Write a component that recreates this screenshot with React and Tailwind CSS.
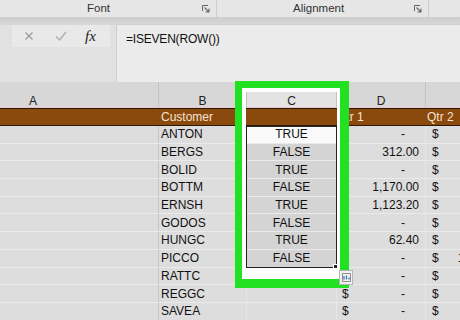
import React from "react";

const rows = [
  ["ANTON", "TRUE", "-"],
  ["BERGS", "FALSE", "312.00"],
  ["BOLID", "TRUE", "-"],
  ["BOTTM", "FALSE", "1,170.00"],
  ["ERNSH", "TRUE", "1,123.20"],
  ["GODOS", "FALSE", "-"],
  ["HUNGC", "TRUE", "62.40"],
  ["PICCO", "FALSE", "-"],
  ["RATTC", "", "-"],
  ["REGGC", "", "-"],
  ["SAVEA", "", "-"],
];

function Launcher() {
  return (
    <svg width="8" height="8" viewBox="0 0 8 8" className="text-[#666]">
      <path d="M0.5 6V0.5H6" fill="none" stroke="currentColor" strokeWidth="1" />
      <path d="M2.5 2.5L7 7M7 3.5V7H3.5" fill="none" stroke="currentColor" strokeWidth="1.1" />
    </svg>
  );
}

export default function App() {
  return (
    <div className="relative w-[460px] h-[320px] overflow-hidden bg-[#dddddd] font-['Liberation_Sans',sans-serif] text-[#111]">
      {/* ribbon group labels */}
      <div className="h-[17px] bg-[#e6e6e6] flex text-[11.5px] text-[#333]">
        <div className="w-[217px] shrink-0 border-r border-[#cdcdcd] flex items-center">
          <span className="ml-[87px]">Font</span>
          <span className="ml-auto mr-[6px] flex">
            <Launcher />
          </span>
        </div>
        <div className="w-[212px] shrink-0 border-r border-[#cdcdcd] flex items-center">
          <span className="ml-[76px]">Alignment</span>
          <span className="ml-auto mr-[6px] flex">
            <Launcher />
          </span>
        </div>
      </div>
      <div className="h-[8px] bg-gradient-to-b from-[#cccccc] to-[#d8d8d8]" />

      {/* formula bar */}
      <div className="h-[57px] bg-[#e1e1e1] flex">
        <div className="ml-[12px] w-[98px] h-[22px] shrink-0 bg-[#e9e9e9] flex items-center">
          <svg width="10" height="10" viewBox="0 0 10 10" className="ml-[12px]">
            <path d="M1.5 1.5L8.5 8.5M8.5 1.5L1.5 8.5" stroke="#9a9a9a" strokeWidth="1.2" />
          </svg>
          <svg width="12" height="10" viewBox="0 0 12 10" className="ml-[21px]">
            <path d="M1 5.5L4.5 9L11 1" fill="none" stroke="#b4b4b4" strokeWidth="1.6" />
          </svg>
          <span className="ml-[18px] font-['Liberation_Serif',serif] italic text-[15px] text-[#222] leading-none">
            fx
          </span>
        </div>
        <div className="ml-[6px] flex-1 bg-[#ebebeb] border-l border-t border-[#cfcfcf] -mt-[1px] pl-[9px] pt-[5px] text-[12px] tracking-[-0.2px] text-[#111]">
          =ISEVEN(ROW())
        </div>
      </div>

      {/* column headers */}
      <div className="h-[26px] bg-[#d7d7d7] border-b border-[#e6c8d0] flex text-[12px] leading-none text-[#222]">
        <div className="w-[159px] shrink-0 border-r border-[#c2c2c2] flex items-end pl-[29px]">A</div>
        <div className="w-[88px] shrink-0 border-r border-[#c2c2c2] flex items-end justify-center">B</div>
        <div className="w-[90px] shrink-0 border-r border-[#c2c2c2] bg-[#e3e3e3] flex items-end justify-center">C</div>
        <div className="w-[89px] shrink-0 border-r border-[#c2c2c2] flex items-end justify-center">D</div>
        <div className="flex-1" />
      </div>

      {/* table header row */}
      <div className="h-[18px] bg-[#8a4a0e] border-y border-[#2e1806] flex items-center text-[12px] text-[#f6e4d4]">
        <span className="ml-[161px] w-[176px] shrink-0">Customer</span>
        <span className="w-[90px] shrink-0">Qtr 1</span>
        <span className="shrink-0">Qtr 2</span>
      </div>

      {/* data rows */}
      {rows.map(([name, flag, q1], i) => (
        <div key={name} className="h-[17.7px] flex text-[12px] border-b border-[#eaeaea]">
          <div className="w-[159px] shrink-0 border-r border-[#c6c6c6]" />
          <div className="w-[88px] shrink-0 border-r border-[#e6e6e6] pl-[2px] flex items-center">{name}</div>
          <div
            className={`w-[90px] shrink-0 border-r border-[#e6e6e6] flex items-center justify-center ${
              i === 0 ? "bg-[#fafafa]" : i < 8 ? "bg-[#d4d4d4]" : ""
            }`}
          >
            {flag}
          </div>
          <div className="w-[89px] shrink-0 border-r border-[#e6e6e6] flex items-center pl-[5px]">
            <span>$</span>
            <span className={`ml-auto ${q1 === "-" ? "mr-[20px]" : "mr-[6px]"}`}>{q1}</span>
          </div>
          <div className="flex-1 min-w-0 flex items-center pl-[6px] whitespace-nowrap">
            <span>$</span>
            {name === "PICCO" && <span className="ml-[19px]">1</span>}
          </div>
        </div>
      ))}

      {/* selection border and fill handle */}
      <div className="absolute left-[246px] top-[126px] w-[91px] h-[142px] border border-[#222]" />
      <div className="absolute left-[333px] top-[264px] w-[5px] h-[5px] bg-[#222] border border-white" />

      {/* green highlight */}
      <div className="absolute left-[235px] top-[81px] w-[114px] h-[207px] border-t-[7px] border-l-[7px] border-r-[9px] border-b-[9px] border-[#22e022]">
        <div className="absolute inset-0 border-t-[4px] border-l-[4px] border-r-[3px] border-b-[11px] border-white" />
      </div>

      {/* quick analysis button */}
      <div className="absolute left-[339px] top-[270px] w-[14px] h-[15px] bg-[#f2f2f2] border border-[#b5b5b5] flex items-center justify-center">
        <svg width="9" height="9" viewBox="0 0 9 9">
          <path d="M0.5 0.5H8.5V8.5H0.5Z" fill="none" stroke="#8a8a8a" strokeWidth="1" />
          <path d="M2 6.5V3M4.5 6.5V2.5M7 6.5V4.5" stroke="#3a6fb0" strokeWidth="1.2" />
        </svg>
      </div>
    </div>
  );
}
